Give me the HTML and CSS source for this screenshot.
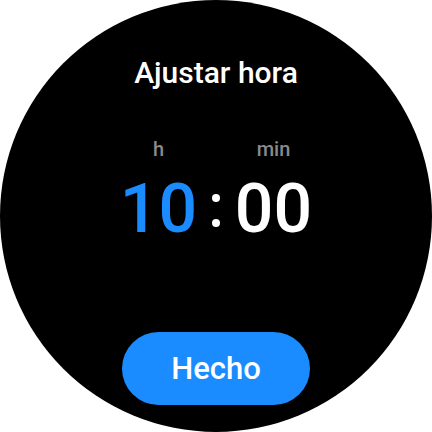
FILE: index.html
```html
<!DOCTYPE html>
<html lang="es">
<head>
<meta charset="utf-8">
<link rel="stylesheet" href="styles.css">
</head>
<body>
<div class="watch">
  <h1 class="title">Ajustar hora</h1>
  <div class="picker">
    <div class="col">
      <div class="label">h</div>
      <div class="value value-active">10</div>
    </div>
    <div class="colon"><span class="dot"></span><span class="dot"></span></div>
    <div class="col">
      <div class="label">min</div>
      <div class="value">00</div>
    </div>
  </div>
  <button class="done">Hecho</button>
</div>
</body>
</html>
```
FILE: styles.css
```css
html, body {
  margin: 0;
  padding: 0;
  background: #ffffff;
}
body {
  width: 432px;
  height: 432px;
  font-family: Roboto, "Liberation Sans", sans-serif;
}
.watch {
  width: 432px;
  height: 432px;
  border-radius: 50%;
  background: #000;
  display: flex;
  flex-direction: column;
  align-items: center;
  box-sizing: border-box;
  padding-top: 55px;
}
.title {
  margin: 0;
  font-size: 30px;
  line-height: 35px;
  font-weight: 500;
  color: #fff;
}
.picker {
  margin-top: 47px;
  display: flex;
  align-items: flex-end;
}
.col {
  width: 100px;
  display: flex;
  flex-direction: column;
  align-items: center;
}
.label {
  font-size: 20px;
  line-height: 24px;
  font-weight: 500;
  color: #8a8a8a;
}
.value {
  margin-top: 12px;
  font-size: 68px;
  line-height: 72px;
  font-weight: 500;
  color: #fff;
}
.value-active {
  color: #1a8cff;
}
.colon {
  width: 15px;
  height: 72px;
  display: flex;
  flex-direction: column;
  align-items: center;
  padding-top: 21px;
  box-sizing: border-box;
  gap: 17px;
}
.dot {
  width: 8px;
  height: 8px;
  border-radius: 50%;
  background: #fff;
}
.done {
  margin-top: 87px;
  width: 188px;
  height: 73px;
  border: none;
  border-radius: 37px;
  background: #1a8cff;
  color: #fff;
  font-family: Roboto, "Liberation Sans", sans-serif;
  font-size: 31px;
  font-weight: 500;
  padding: 0;
}
```
